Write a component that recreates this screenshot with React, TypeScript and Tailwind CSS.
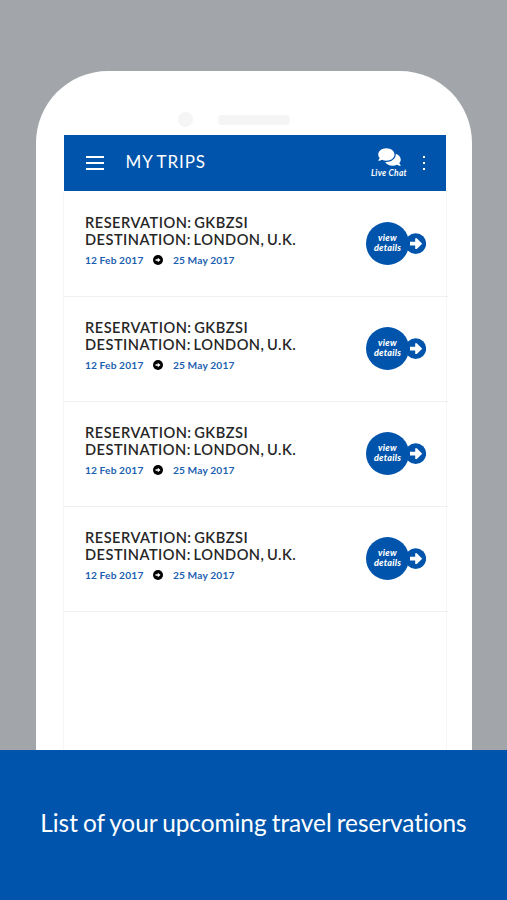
import { FaComments } from "react-icons/fa";

interface Trip {
  id: number;
  reservation: string;
  destination: string;
  from: string;
  to: string;
}

const trips: Trip[] = [1, 2, 3, 4].map((id) => ({
  id,
  reservation: "GKBZSI",
  destination: "LONDON, U.K.",
  from: "12 Feb 2017",
  to: "25 May 2017",
}));

function DateArrow() {
  return (
    <svg viewBox="0 0 20 20" className="size-[10px] shrink-0">
      <circle cx="10" cy="10" r="10" fill="#000" />
      <path d="M5 8.3h4.5V5.4l5.6 4.6-5.6 4.6v-2.9H5z" fill="#fff" />
    </svg>
  );
}

function ViewDetails() {
  return (
    <button className="relative flex h-[43px] w-[60px] items-center">
      <svg viewBox="0 0 60 43" className="absolute inset-0 h-full w-full">
        <circle cx="21.5" cy="21.5" r="21.5" fill="#0054ab" />
        <circle cx="49.7" cy="21.7" r="10.4" fill="#0054ab" />
        <path d="M44 19.8h5.2v-3.5h1.6l5.4 5.4-5.4 5.4h-1.6v-3.5H44z" fill="#fff" />
      </svg>
      <span className="relative w-[43px] pb-px text-center text-[9px] leading-[10.5px] font-black tracking-[0.25px] text-white italic">
        view
        <br />
        details
      </span>
    </button>
  );
}

function TripRow({ trip }: { trip: Trip }) {
  return (
    <li className="flex h-[105px] w-[384px] justify-between border-b border-[#efefef] pr-[22px] pl-[21px]">
      <div className="pt-[22px]">
        <h2 className="text-[14.6px] leading-[17px] font-semibold tracking-[0.48px] [word-spacing:-1.4px] text-[#262626]">
          RESERVATION: {trip.reservation}
          <br />
          DESTINATION: {trip.destination}
        </h2>
        <div className="mt-[5px] flex items-center text-[10.2px] leading-[14px] font-bold tracking-[0.2px] [word-spacing:-0.3px] text-[#1c5fb0]">
          <span className="w-[68px]">{trip.from}</span>
          <DateArrow />
          <span className="ml-[10px]">{trip.to}</span>
        </div>
      </div>
      <div className="pt-[30px]">
        <ViewDetails />
      </div>
    </li>
  );
}

function Header() {
  return (
    <header className="flex h-[55.5px] w-[382px] items-center bg-[#0054ab] text-white">
      <div className="ml-[22px] flex w-[18px] flex-col gap-1">
        <span className="h-[2px] bg-white" />
        <span className="h-[2px] bg-white" />
        <span className="h-[2px] bg-white" />
      </div>
      <h1 className="ml-[21.5px] pb-px text-[17px] leading-5 tracking-[0.95px] [word-spacing:-1.5px]">MY TRIPS</h1>
      <div className="ml-auto flex w-[40px] flex-col items-center pt-px">
        <FaComments className="h-[20px] w-[25px]" />
        <span className="text-[8.5px] leading-[12px] font-bold tracking-[0.25px] whitespace-nowrap italic">
          Live Chat
        </span>
      </div>
      <div className="mr-[21px] ml-[14px] flex flex-col gap-1">
        <span className="size-[2px] bg-white" />
        <span className="size-[2px] bg-white" />
        <span className="size-[2px] bg-white" />
      </div>
    </header>
  );
}

export default function App() {
  return (
    <div className="flex h-[900px] w-[507px] flex-col overflow-hidden bg-[#a2a6aa] font-['Lato',sans-serif]">
      <main className="mt-[71px] ml-[35.5px] flex w-[436.5px] flex-1 flex-col rounded-t-[72px] bg-white">
        <div className="flex h-[64px] items-center pt-[33px] pl-[142px]">
          <span className="size-[15px] rounded-full bg-[#f5f5f5]" />
          <span className="ml-[25px] h-[10px] w-[72px] rounded-[4px] bg-[#f5f5f5]" />
        </div>
        <div className="ml-[28.5px] flex w-[384px] flex-1 flex-col">
          <Header />
          <div className="-ml-px flex w-[384px] flex-1 border-x border-[#f6f6f6]">
            <ul className="pt-[1.5px]">
              {trips.map((trip) => (
                <TripRow key={trip.id} trip={trip} />
              ))}
            </ul>
          </div>
        </div>
      </main>
      <footer className="flex h-[150px] shrink-0 items-center justify-center bg-[#0054ab]">
        <p className="pb-1 text-[24.4px] leading-8 tracking-[-0.05px] [word-spacing:-1px] whitespace-nowrap text-white [font-variant-ligatures:none]">
          List of your upcoming travel reservations
        </p>
      </footer>
    </div>
  );
}
